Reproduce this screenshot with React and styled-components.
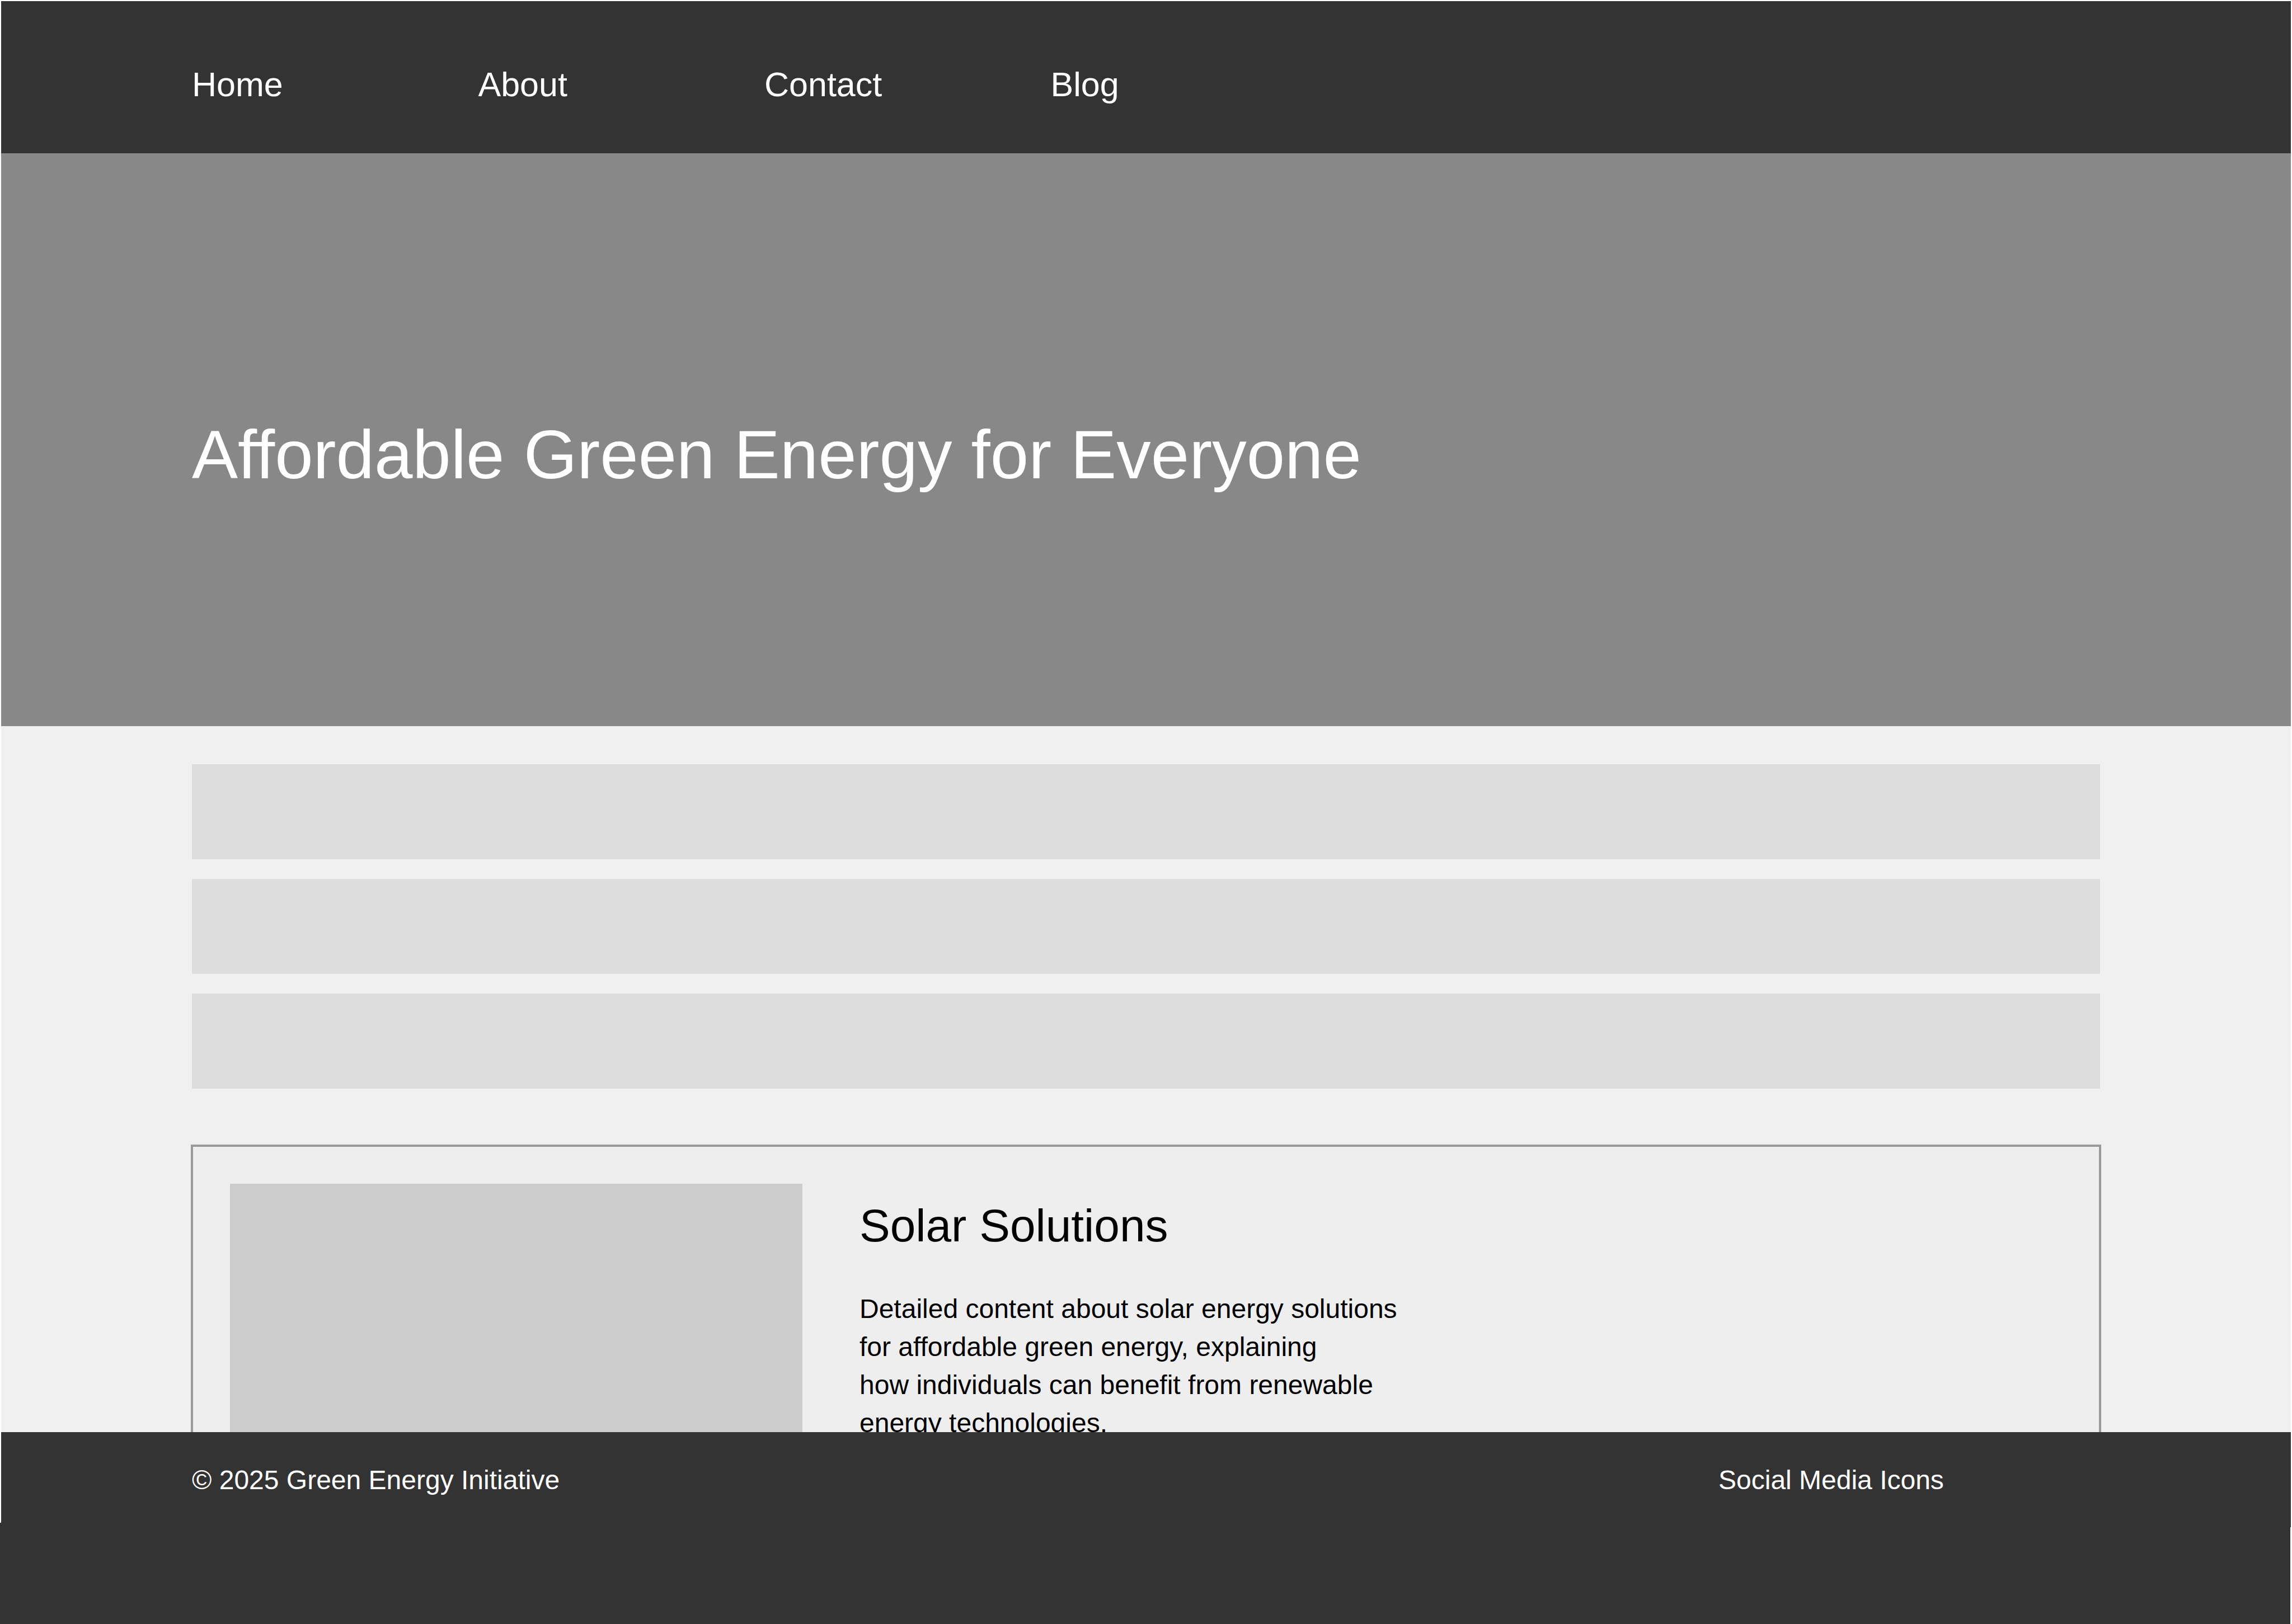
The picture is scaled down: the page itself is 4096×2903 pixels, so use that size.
import React from "react";
import styled, { createGlobalStyle } from "styled-components";

const GlobalStyle = createGlobalStyle`
  *, *::before, *::after {
    box-sizing: border-box;
  }
  body {
    margin: 0;
    background: #fff;
    color: #000;
    font-family: "Liberation Sans", Arial, Helvetica, sans-serif;
  }
  h1, h2, p, ul {
    margin: 0;
    padding: 0;
    font-weight: 400;
  }
`;

const Page = styled.div`
  display: flex;
  flex-direction: column;
  height: 100vh;
  padding-top: 2px;
  overflow: hidden;
`;

const Header = styled.header`
  flex: none;
  margin: 0 2px;
  padding: 113px 341px 87px;
  background: #333;
`;

const NavList = styled.ul`
  display: grid;
  grid-template-columns: repeat(4, 15%);
  list-style: none;
  font-size: 61px;
  line-height: 72px;
`;

const NavLink = styled.a`
  color: #fff;
  text-decoration: none;
`;

const Hero = styled.section`
  flex: none;
  margin: 0 2px;
  padding: 469px 341px 415px;
  background: #888;
`;

const HeroTitle = styled.h1`
  color: #fff;
  font-size: 123px;
  line-height: 140px;
`;

const Main = styled.main`
  flex: 1;
  min-height: 0;
  margin: 0 2px;
  padding: 68px 341px 0;
  background: #f0f0f0;
  overflow: hidden;
`;

const BarList = styled.div`
  display: grid;
  gap: 35px;
  margin-bottom: 100px;
`;

const Bar = styled.div`
  height: 170px;
  background: #ddd;
`;

const Article = styled.article`
  display: flex;
  gap: 102px;
  margin: 0 -2px;
  padding: 66px;
  border: 4px solid #999;
  background: #eee;
`;

const Picture = styled.div`
  flex: none;
  width: 1023px;
  height: 682px;
  background: #ccc;
`;

const ArticleText = styled.div`
  display: grid;
  align-content: start;
  gap: 67px;
  padding-top: 27px;
`;

const ArticleTitle = styled.h2`
  font-size: 82px;
  line-height: 96px;
`;

const ArticleBody = styled.p`
  font-size: 48px;
  line-height: 68px;
  white-space: pre-line;
`;

const Footer = styled.footer`
  display: grid;
  flex: none;
  grid-template-columns: 4fr 1fr;
  margin: 0 2px;
  padding: 52px 341px 50px;
  background: #333;
  color: #fff;
  font-size: 48px;
  line-height: 68px;
`;

const FooterBase = styled.div`
  flex: none;
  height: 181px;
  margin: -8px 3px 0 0;
  background: #333;
`;

const links = ["Home", "About", "Contact", "Blog"];
const bars = [1, 2, 3];
const solarText = `Detailed content about solar energy solutions
for affordable green energy, explaining
how individuals can benefit from renewable
energy technologies.`;

export default function App() {
  return (
    <>
      <GlobalStyle />
      <Page>
        <Header>
          <nav>
            <NavList>
              {links.map((name) => (
                <li key={name}>
                  <NavLink href={`#${name.toLowerCase()}`}>{name}</NavLink>
                </li>
              ))}
            </NavList>
          </nav>
        </Header>
        <Hero>
          <HeroTitle>Affordable Green Energy for Everyone</HeroTitle>
        </Hero>
        <Main>
          <BarList>
            {bars.map((id) => (
              <Bar key={id} />
            ))}
          </BarList>
          <Article>
            <Picture />
            <ArticleText>
              <ArticleTitle>Solar Solutions</ArticleTitle>
              <ArticleBody>{solarText}</ArticleBody>
            </ArticleText>
          </Article>
        </Main>
        <Footer>
          <p>© 2025 Green Energy Initiative</p>
          <p>Social Media Icons</p>
        </Footer>
        <FooterBase />
      </Page>
    </>
  );
}
